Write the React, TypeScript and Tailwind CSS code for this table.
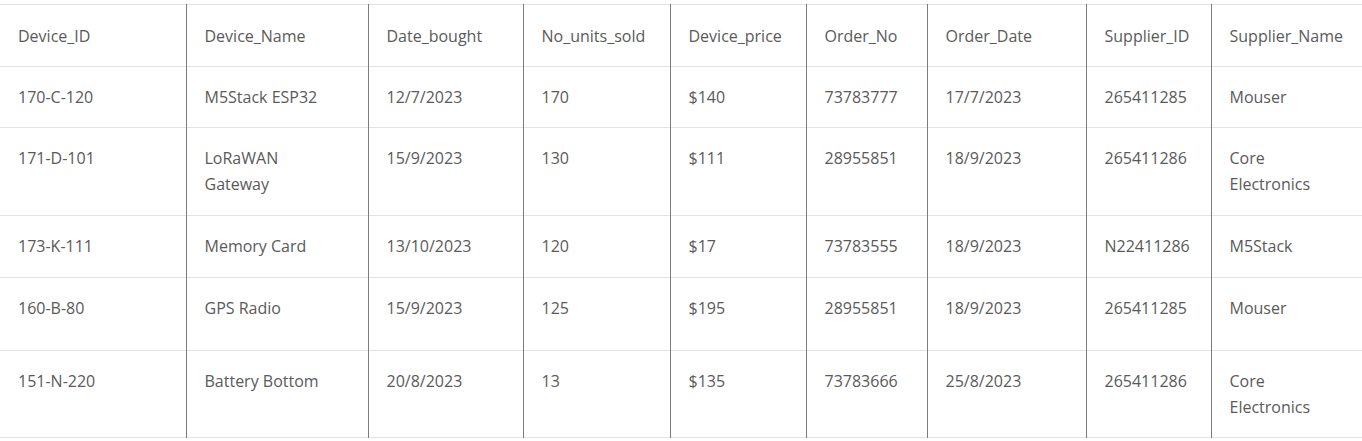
const columns = [
  { key: "id", label: "Device_ID", w: "w-[186px]" },
  { key: "name", label: "Device_Name", w: "w-[182px]" },
  { key: "bought", label: "Date_bought", w: "w-[155px]" },
  { key: "units", label: "No_units_sold", w: "w-[147px]" },
  { key: "price", label: "Device_price", w: "w-[136px]" },
  { key: "order", label: "Order_No", w: "w-[121px]" },
  { key: "date", label: "Order_Date", w: "w-[159px]" },
  { key: "supId", label: "Supplier_ID", w: "w-[125px]" },
  { key: "supName", label: "Supplier_Name", w: "w-[151px]" },
];

type Row = { h: string; cells: string[][] };

const rows: Row[] = [
  { h: "h-[61px]", cells: [["170-C-120"], ["M5Stack ESP32"], ["12/7/2023"], ["170"], ["$140"], ["73783777"], ["17/7/2023"], ["265411285"], ["Mouser"]] },
  { h: "h-[88px]", cells: [["171-D-101"], ["LoRaWAN", "Gateway"], ["15/9/2023"], ["130"], ["$111"], ["28955851"], ["18/9/2023"], ["265411286"], ["Core", "Electronics"]] },
  { h: "h-[62px]", cells: [["173-K-111"], ["Memory Card"], ["13/10/2023"], ["120"], ["$17"], ["73783555"], ["18/9/2023"], ["N22411286"], ["M5Stack"]] },
  { h: "h-[73px]", cells: [["160-B-80"], ["GPS Radio"], ["15/9/2023"], ["125"], ["$195"], ["28955851"], ["18/9/2023"], ["265411285"], ["Mouser"]] },
  { h: "h-[87px]", cells: [["151-N-220"], ["Battery Bottom"], ["20/8/2023"], ["13"], ["$135"], ["73783666"], ["25/8/2023"], ["265411286"], ["Core", "Electronics"]] },
];

export default function App() {
  return (
    <div className="bg-white pt-[4px] font-['Open_Sans',sans-serif] text-[16px] leading-[26px] text-[#5a5a5a]">
      <table className="w-[1362px] table-fixed border-collapse">
        <thead>
          <tr className="h-[62px] border-y border-[#e2e2e8] align-top">
            {columns.map((c, i) => (
              <th
                key={c.key}
                className={`${c.w} px-[18px] pt-[18px] text-left font-normal ${i < columns.length - 1 ? "border-r border-r-[#7c7c7c]" : ""}`}
              >
                {c.label}
              </th>
            ))}
          </tr>
        </thead>
        <tbody>
          {rows.map((r, ri) => (
            <tr key={ri} className={`${r.h} border-b border-[#e2e2e8] align-top`}>
              {r.cells.map((lines, i) => (
                <td
                  key={i}
                  className={`px-[18px] pt-[17px] ${i < columns.length - 1 ? "border-r border-r-[#7c7c7c]" : ""}`}
                >
                  {lines.map((l, li) => (
                    <div key={li}>{l}</div>
                  ))}
                </td>
              ))}
            </tr>
          ))}
        </tbody>
      </table>
    </div>
  );
}
